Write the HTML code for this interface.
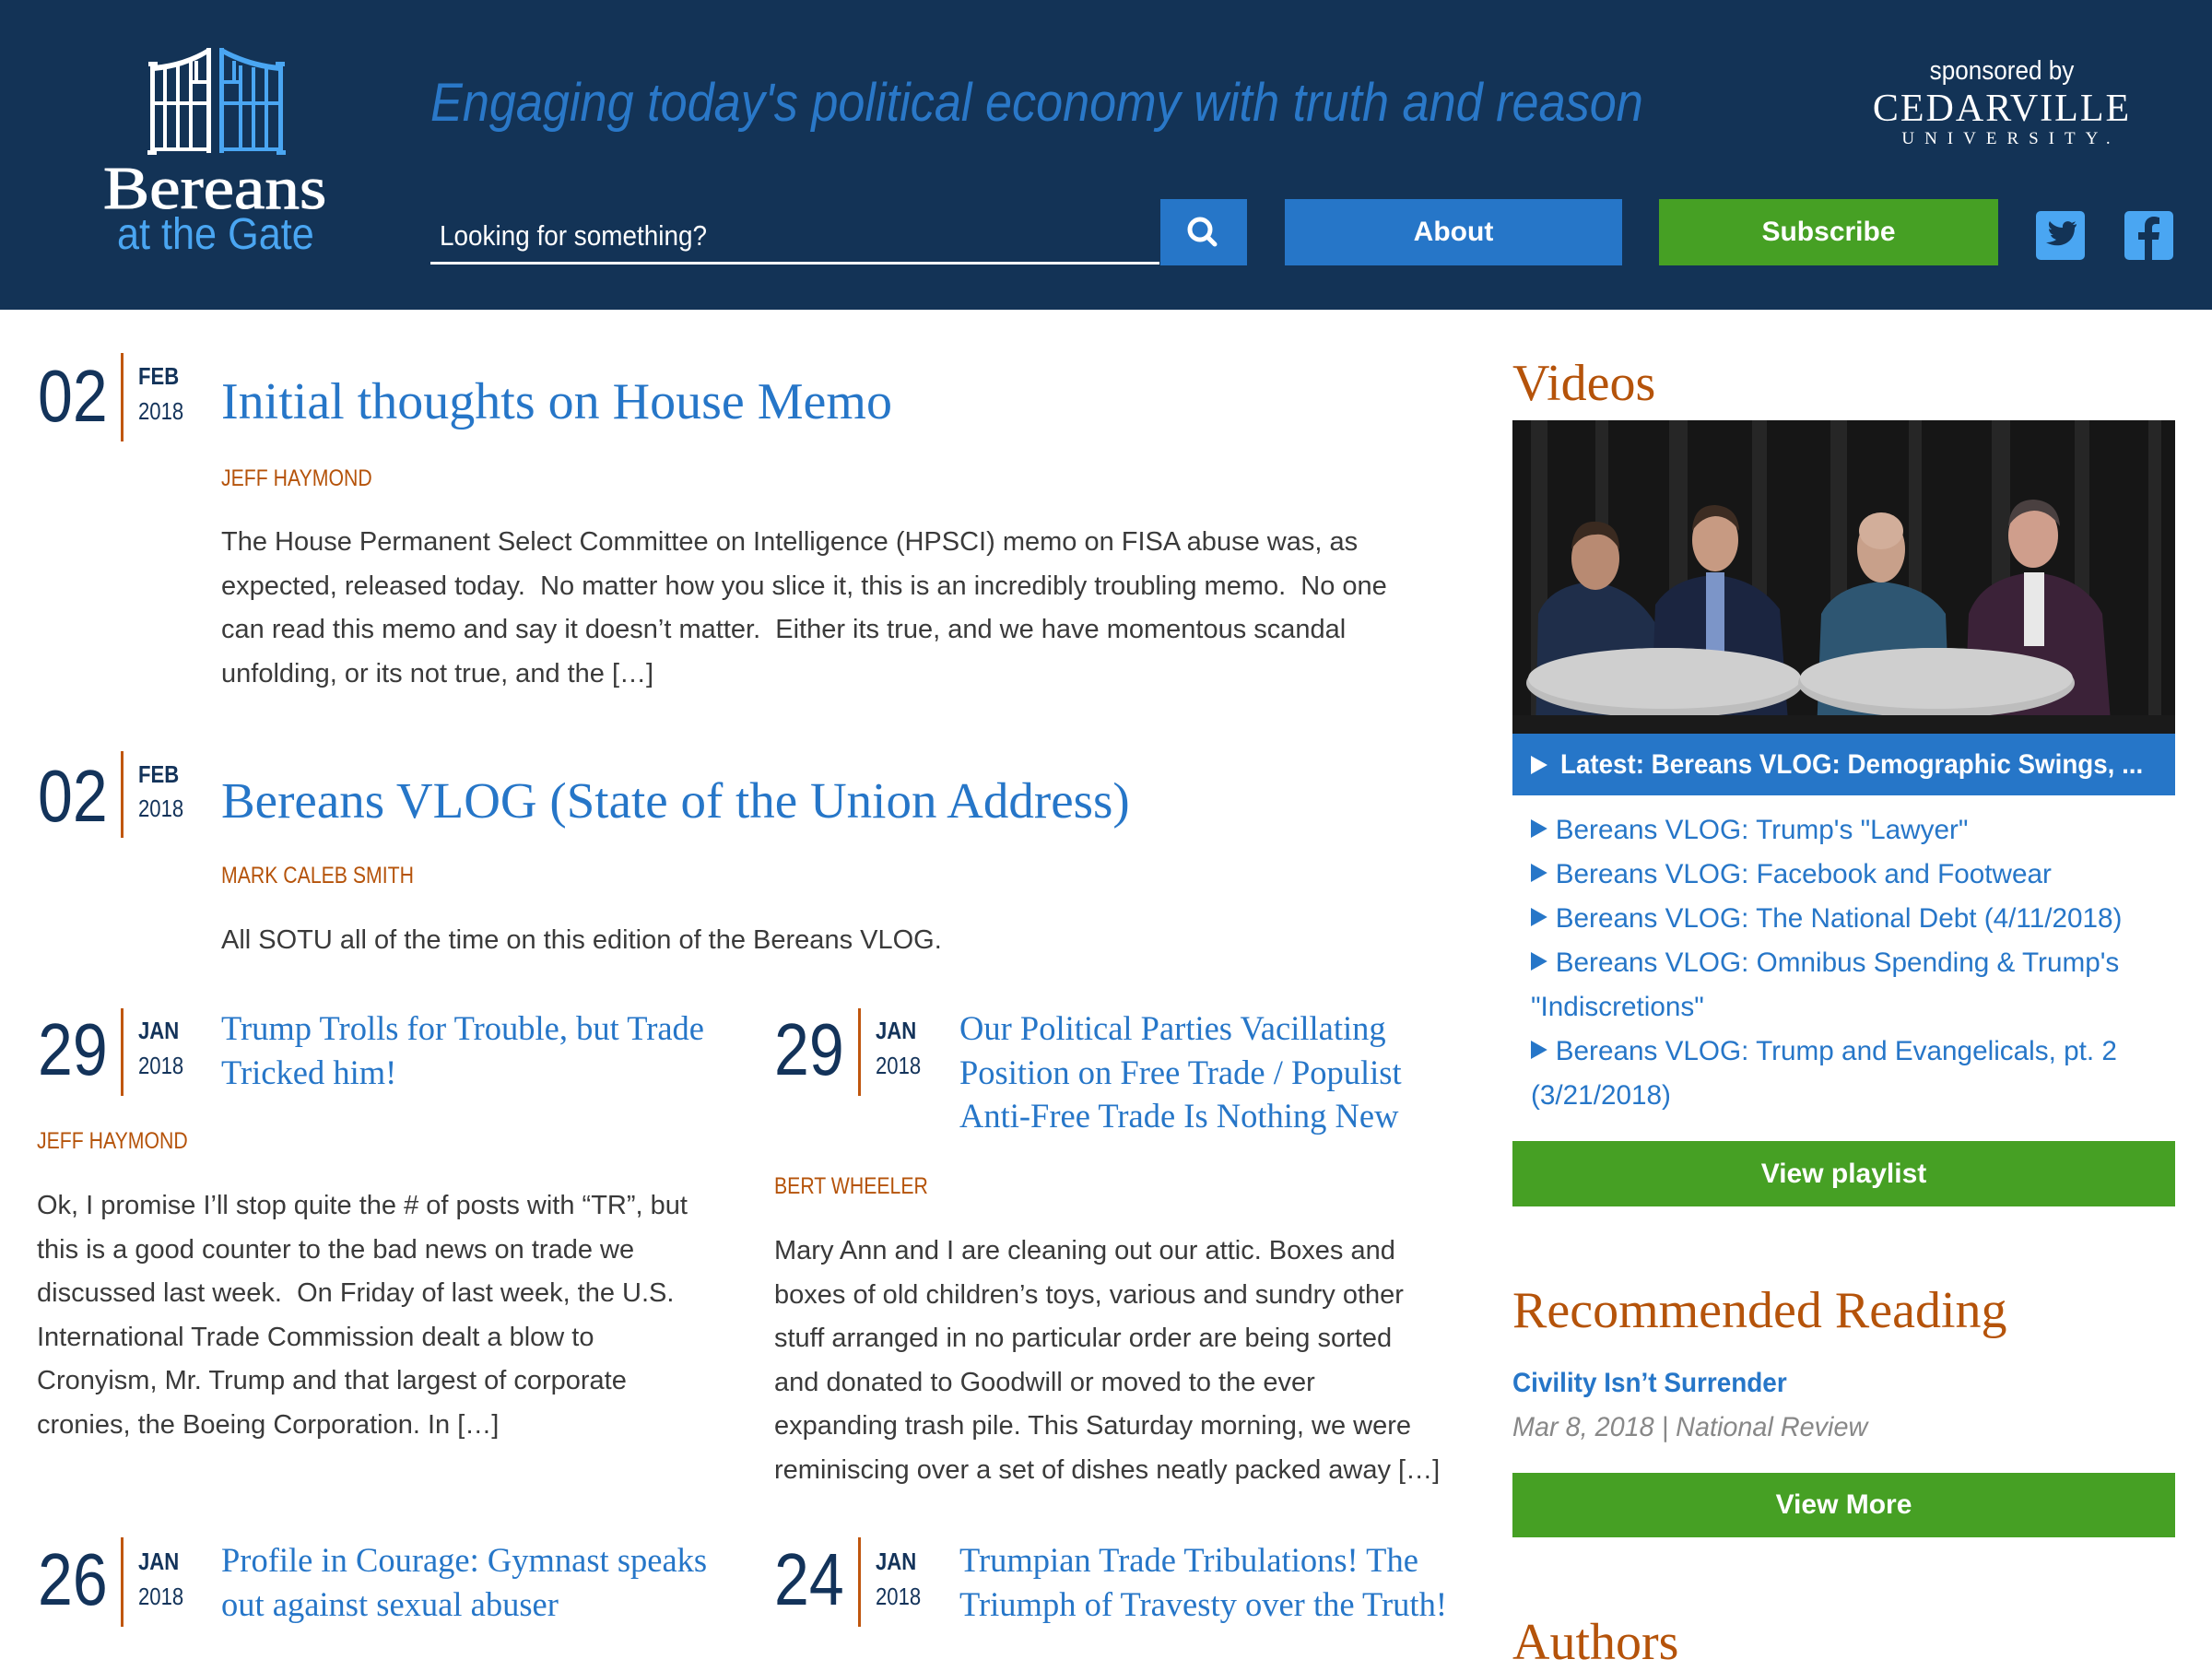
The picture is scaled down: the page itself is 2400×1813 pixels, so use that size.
<!DOCTYPE html>
<html><head><meta charset="utf-8"><style>
*{margin:0;padding:0;box-sizing:border-box}
html,body{width:2400px;height:1800px;overflow:hidden;background:#fff;font-family:"Liberation Sans",Arial,sans-serif}
.t{position:absolute;white-space:nowrap}
.hdr{position:absolute;left:0;top:0;width:2400px;height:336px;background:#133356}
.num{position:absolute;font-size:80px;line-height:80px;color:#13335a;transform:scaleX(.85);transform-origin:left;white-space:nowrap}
.bar{position:absolute;width:3px;background:#c0560e}
.mon{position:absolute;font-size:26px;line-height:30px;font-weight:bold;color:#13335a;transform:scaleX(.85);transform-origin:left}
.yr{position:absolute;font-size:26px;line-height:30px;color:#13335a;transform:scaleX(.85);transform-origin:left}
.ttl{position:absolute;font-family:"Liberation Serif",serif;color:#2676c8;white-space:nowrap}
.auth{position:absolute;font-size:25px;line-height:30px;color:#b5530a;transform:scaleX(.85);transform-origin:left;white-space:nowrap}
.txt{position:absolute;font-size:29px;line-height:47.6px;color:#3a3a3a;white-space:nowrap}
.btn{position:absolute;color:#fff;font-weight:bold;font-size:30px;text-align:center}
.h2{position:absolute;font-family:"Liberation Serif",serif;color:#b5530a;font-size:56px;line-height:60px;white-space:nowrap}
.vl{position:absolute;left:1661px;top:877px;font-size:30px;line-height:48px;color:#2676c8;white-space:nowrap;transform:scaleX(.99);transform-origin:left}
.tri{display:inline-block;width:0;height:0;border-left:18px solid #2676c8;border-top:10px solid transparent;border-bottom:10px solid transparent;margin-right:9px;vertical-align:1px}
</style></head><body>
<div class="hdr"></div>
<svg style="position:absolute;left:150px;top:40px" width="170" height="140" viewBox="0 0 170 140">
<g fill="#fff">
<rect x="11" y="27" width="10" height="5"/><rect x="13" y="30" width="5" height="98"/><rect x="10" y="123" width="10" height="5"/>
<rect x="74" y="12" width="5" height="114"/>
<path d="M17 31 Q50 28 76 12 L76 18 Q50 34 17 37 Z"/>
<rect x="17" y="120" width="60" height="4"/>
<rect x="17" y="70" width="60" height="4"/>
<rect x="27" y="33" width="4" height="90"/><rect x="41" y="31" width="4" height="92"/><rect x="55" y="26" width="4" height="97"/>
<rect x="55" y="47" width="22" height="4"/><rect x="61" y="26" width="4" height="24"/>
</g>
<g fill="#4aa6f2">
<rect x="149" y="27" width="10" height="5"/><rect x="152" y="30" width="5" height="98"/><rect x="150" y="123" width="10" height="5"/>
<rect x="88" y="12" width="5" height="114"/>
<path d="M153 31 Q120 28 91 12 L91 18 Q120 34 153 37 Z"/>
<rect x="91" y="120" width="62" height="4"/>
<rect x="91" y="70" width="62" height="4"/>
<rect x="109" y="31" width="4" height="92"/><rect x="123" y="33" width="4" height="90"/><rect x="137" y="34" width="4" height="89"/>
<rect x="91" y="47" width="22" height="4"/><rect x="102" y="26" width="4" height="24"/>
</g>
</svg>
<div class="t" style="left:112px;top:170px;font-family:'Liberation Serif',serif;font-size:66px;line-height:70px;color:#fff;transform:scaleX(1.14);transform-origin:left;-webkit-text-stroke:1px #fff">Bereans</div>
<div class="t" style="left:127px;top:230px;font-size:48px;line-height:50px;color:#4aa6f2;transform:scaleX(.9);transform-origin:left">at the Gate</div>
<div class="t" style="left:467px;top:77px;font-size:58px;line-height:70px;font-style:italic;color:#2a78c8;transform:scaleX(.9);transform-origin:left">Engaging today's political economy with truth and reason</div>
<div class="t" style="left:477px;top:236px;font-size:31px;line-height:40px;color:#fff;transform:scaleX(.9);transform-origin:left">Looking for something?</div>
<div style="position:absolute;left:467px;top:284px;width:791px;height:3px;background:#fff"></div>
<div style="position:absolute;left:1259px;top:216px;width:94px;height:72px;background:#2676c8"></div>
<svg style="position:absolute;left:1259px;top:216px" width="94" height="72"><circle cx="43" cy="33" r="11" fill="none" stroke="#fff" stroke-width="5"/><line x1="51" y1="41" x2="59" y2="49" stroke="#fff" stroke-width="5" stroke-linecap="round"/></svg>
<div class="btn" style="left:1394px;top:216px;width:366px;height:72px;line-height:72px;background:#2676c8">About</div>
<div class="btn" style="left:1800px;top:216px;width:368px;height:72px;line-height:72px;background:#46a024">Subscribe</div>
<svg style="position:absolute;left:2209px;top:229px" width="53" height="53" viewBox="0 0 53 53"><rect width="53" height="53" rx="5" fill="#4aa6f2"/>
<path d="M44 14 c-2 1-3 1-4 1 c1-1 2-2 3-4 c-1 1-3 1-4 2 c-4-4-11-1-10 5 c-6 0-11-3-14-7 c-2 3-1 7 2 9 c-1 0-2 0-3-1 c0 3 2 6 5 7 c-1 0-2 0-3 0 c1 3 4 4 6 5 c-3 2-7 3-11 3 c14 8 31 1 31-16 c1-1 2-2 2-4z" fill="#133356"/></svg>
<svg style="position:absolute;left:2305px;top:229px" width="53" height="53" viewBox="0 0 53 53"><rect width="53" height="53" rx="5" fill="#4aa6f2"/>
<path d="M30 53 V31 H37 L38 23 H30 V18 c0-2 1-4 4-4 h4 V7 c-1 0-3-1-6-1 c-6 0-10 4-10 10 V23 H15 V31 H22 V53 Z" fill="#133356"/></svg>
<div class="t" style="left:2072px;top:60px;width:200px;text-align:center;font-size:29px;line-height:34px;color:#fff;transform:scaleX(.9)">sponsored by</div>
<div class="t" style="left:2022px;top:96px;width:300px;text-align:center;font-family:'Liberation Serif',serif;font-size:42px;line-height:44px;color:#fff;letter-spacing:2px">CEDARVILLE</div>
<div class="t" style="left:2052px;top:140px;width:260px;text-align:center;font-family:'Liberation Serif',serif;font-size:19px;line-height:22px;color:#fff;letter-spacing:11px">UNIVERSITY.</div>

<div class="num" style="left:41px;top:390px">02</div>
<div class="bar" style="left:131px;top:383px;height:96px"></div>
<div class="mon" style="left:150px;top:393px">FEB</div>
<div class="yr" style="left:150px;top:431px">2018</div>
<div class="ttl" style="left:240px;top:406px;font-size:56px;line-height:60px">Initial thoughts on House Memo</div>
<div class="auth" style="left:240px;top:504px">JEFF HAYMOND</div>
<div class="txt" style="left:240px;top:565px">The House Permanent Select Committee on Intelligence (HPSCI) memo on FISA abuse was, as<br>expected, released today.&nbsp; No matter how you slice it, this is an incredibly troubling memo.&nbsp; No one<br>can read this memo and say it doesn’t matter.&nbsp; Either its true, and we have momentous scandal<br>unfolding, or its not true, and the […]</div>

<div class="num" style="left:41px;top:824px">02</div>
<div class="bar" style="left:131px;top:815px;height:94px"></div>
<div class="mon" style="left:150px;top:825px">FEB</div>
<div class="yr" style="left:150px;top:862px">2018</div>
<div class="ttl" style="left:240px;top:839px;font-size:55px;line-height:60px">Bereans VLOG (State of the Union Address)</div>
<div class="auth" style="left:240px;top:935px">MARK CALEB SMITH</div>
<div class="txt" style="left:240px;top:997px">All SOTU all of the time on this edition of the Bereans VLOG.</div>

<div class="num" style="left:41px;top:1099px">29</div>
<div class="bar" style="left:131px;top:1094px;height:95px"></div>
<div class="mon" style="left:150px;top:1103px">JAN</div>
<div class="yr" style="left:150px;top:1141px">2018</div>
<div class="ttl" style="left:240px;top:1092px;font-size:36.5px;line-height:47.5px">Trump Trolls for Trouble, but Trade<br>Tricked him!</div>
<div class="auth" style="left:40px;top:1223px">JEFF HAYMOND</div>
<div class="txt" style="left:40px;top:1285px">Ok, I promise I’ll stop quite the # of posts with “TR”, but<br>this is a good counter to the bad news on trade we<br>discussed last week.&nbsp; On Friday of last week, the U.S.<br>International Trade Commission dealt a blow to<br>Cronyism, Mr. Trump and that largest of corporate<br>cronies, the Boeing Corporation. In […]</div>

<div class="num" style="left:840px;top:1099px">29</div>
<div class="bar" style="left:931px;top:1094px;height:95px"></div>
<div class="mon" style="left:950px;top:1103px">JAN</div>
<div class="yr" style="left:950px;top:1141px">2018</div>
<div class="ttl" style="left:1041px;top:1092px;font-size:36.5px;line-height:47.5px">Our Political Parties Vacillating<br>Position on Free Trade / Populist<br>Anti-Free Trade Is Nothing New</div>
<div class="auth" style="left:840px;top:1272px">BERT WHEELER</div>
<div class="txt" style="left:840px;top:1334px">Mary Ann and I are cleaning out our attic. Boxes and<br>boxes of old children’s toys, various and sundry other<br>stuff arranged in no particular order are being sorted<br>and donated to Goodwill or moved to the ever<br>expanding trash pile. This Saturday morning, we were<br>reminiscing over a set of dishes neatly packed away […]</div>

<div class="num" style="left:41px;top:1674px">26</div>
<div class="bar" style="left:131px;top:1668px;height:97px"></div>
<div class="mon" style="left:150px;top:1679px">JAN</div>
<div class="yr" style="left:150px;top:1717px">2018</div>
<div class="ttl" style="left:240px;top:1669px;font-size:36.5px;line-height:47.5px">Profile in Courage: Gymnast speaks<br>out against sexual abuser</div>
<div class="num" style="left:840px;top:1674px">24</div>
<div class="bar" style="left:931px;top:1668px;height:97px"></div>
<div class="mon" style="left:950px;top:1679px">JAN</div>
<div class="yr" style="left:950px;top:1717px">2018</div>
<div class="ttl" style="left:1041px;top:1669px;font-size:36.5px;line-height:47.5px">Trumpian Trade Tribulations! The<br>Triumph of Travesty over the Truth!</div>

<div class="h2" style="left:1641px;top:386px">Videos</div>
<svg style="position:absolute;left:1641px;top:456px" width="719" height="340" viewBox="0 0 719 340">
<rect width="719" height="340" fill="#161616"/>
<g fill="#262626"><rect x="20" y="0" width="18" height="340"/><rect x="90" y="0" width="14" height="340"/><rect x="170" y="0" width="20" height="340"/><rect x="260" y="0" width="16" height="340"/><rect x="345" y="0" width="18" height="340"/><rect x="430" y="0" width="14" height="340"/><rect x="520" y="0" width="20" height="340"/><rect x="610" y="0" width="16" height="340"/><rect x="690" y="0" width="14" height="340"/></g>
<path d="M25 340 L28 210 Q40 180 85 175 Q130 180 155 220 L160 340Z" fill="#1f2e4a"/>
<ellipse cx="90" cy="150" rx="26" ry="34" fill="#b88a72"/><path d="M64 140 Q66 108 92 110 Q116 112 116 140 Q105 122 90 124 Q74 124 64 140Z" fill="#3a2a20"/>
<path d="M150 340 L155 200 Q175 170 220 168 Q265 172 290 205 L300 340Z" fill="#1b2540"/>
<ellipse cx="220" cy="130" rx="25" ry="34" fill="#c79a82"/><path d="M195 120 Q196 92 220 92 Q245 94 246 120 Q235 104 220 104 Q205 105 195 120Z" fill="#3d2c22"/>
<rect x="210" y="165" width="20" height="110" fill="#7c95c8"/>
<path d="M330 340 L335 210 Q350 180 400 175 Q450 180 470 210 L475 340Z" fill="#2e5672"/>
<ellipse cx="400" cy="140" rx="26" ry="36" fill="#c8a08a"/><ellipse cx="400" cy="120" rx="24" ry="20" fill="#d2ae9a"/>
<path d="M490 340 L495 210 Q510 170 565 165 Q620 170 640 210 L650 340Z" fill="#3b2238"/>
<ellipse cx="565" cy="125" rx="27" ry="35" fill="#cf9e8c"/><path d="M538 115 Q540 86 566 86 Q592 88 594 115 Q582 98 566 98 Q548 99 538 115Z" fill="#4a4040"/>
<rect x="555" y="165" width="22" height="80" fill="#e8e8e8"/>
<ellipse cx="165" cy="285" rx="150" ry="38" fill="#bdbdbd"/><ellipse cx="165" cy="280" rx="148" ry="33" fill="#cfcfcf"/>
<ellipse cx="460" cy="285" rx="150" ry="38" fill="#bdbdbd"/><ellipse cx="460" cy="280" rx="148" ry="33" fill="#cfcfcf"/>
<rect x="0" y="320" width="719" height="20" fill="#1a1a1a"/>
</svg>
<div style="position:absolute;left:1641px;top:796px;width:719px;height:67px;background:#2676c8"></div>
<div style="position:absolute;left:1661px;top:820px;width:0;height:0;border-left:18px solid #fff;border-top:10px solid transparent;border-bottom:10px solid transparent"></div>
<div class="t" style="left:1693px;top:810px;font-size:30px;line-height:40px;font-weight:bold;color:#fff;transform:scaleX(.925);transform-origin:left">Latest: Bereans VLOG: Demographic Swings, ...</div>
<div class="vl"><span class="tri"></span>Bereans VLOG: Trump's "Lawyer"<br><span class="tri"></span>Bereans VLOG: Facebook and Footwear<br><span class="tri"></span>Bereans VLOG: The National Debt (4/11/2018)<br><span class="tri"></span>Bereans VLOG: Omnibus Spending &amp; Trump's<br>"Indiscretions"<br><span class="tri"></span>Bereans VLOG: Trump and Evangelicals, pt. 2<br>(3/21/2018)</div>
<div class="btn" style="left:1641px;top:1238px;width:719px;height:71px;line-height:71px;background:#46a024">View playlist</div>
<div class="h2" style="left:1641px;top:1392px">Recommended Reading</div>
<div class="t" style="left:1641px;top:1481px;font-size:30px;line-height:40px;font-weight:bold;color:#2676c8;transform:scaleX(.93);transform-origin:left">Civility Isn’t Surrender</div>
<div class="t" style="left:1641px;top:1529px;font-size:30px;line-height:40px;font-style:italic;color:#888;transform:scaleX(.96);transform-origin:left">Mar 8, 2018 | National Review</div>
<div class="btn" style="left:1641px;top:1598px;width:719px;height:70px;line-height:70px;background:#46a024">View More</div>
<div class="h2" style="left:1641px;top:1752px">Authors</div>
</body></html>
